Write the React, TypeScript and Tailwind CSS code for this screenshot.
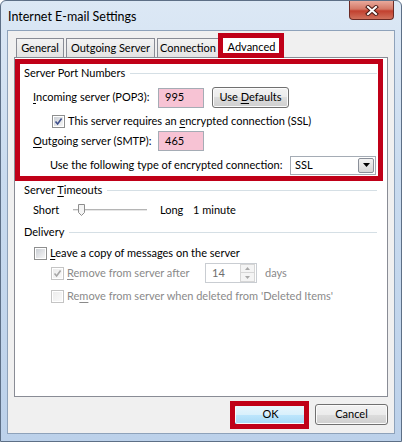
import type { ReactNode } from 'react';

const font = "font-['Lato',sans-serif]";

function U({ children }: { children: ReactNode }) {
  return <span className="underline underline-offset-2 decoration-1">{children}</span>;
}

function WinButton({ children, className = '', primary = false }: { children: ReactNode; className?: string; primary?: boolean }) {
  return (
    <div
      className={`flex h-[21px] items-center justify-center rounded-[3px] border text-[11px] text-black shadow-[inset_0_0_0_1px_#fbfbfb] ${
        primary
          ? 'border-[#3c7fb1] bg-[linear-gradient(180deg,#eaf6fd_0%,#d9f0fc_50%,#bee6fd_50%,#a7d9f5_100%)]'
          : 'border-[#707070] bg-[linear-gradient(180deg,#f2f2f2_0%,#ebebeb_50%,#dddddd_50%,#cfcfcf_100%)]'
      } ${className}`}
    >
      {children}
    </div>
  );
}

function Check({ checked = false, disabled = false }: { checked?: boolean; disabled?: boolean }) {
  return (
    <div
      className={`flex h-[13px] w-[13px] shrink-0 items-center justify-center border bg-white p-px ${
        disabled ? 'border-[#c4c4c4]' : 'border-[#8e8f8f]'
      }`}
    >
      <div
        className={`relative h-full w-full ${
          disabled
            ? 'bg-[linear-gradient(135deg,#ececec,#f9f9f9)]'
            : 'bg-[linear-gradient(135deg,#cbcfd5,#f6f6f6)]'
        }`}
      >
        {checked && (
          <svg viewBox="0 0 9 9" className="absolute inset-0 h-full w-full">
            <path d="M1.5 4.5 L3.6 7 L7.6 1.5" fill="none" stroke={disabled ? '#a6a6a6' : '#3e4f8c'} strokeWidth="1.6" />
          </svg>
        )}
      </div>
    </div>
  );
}

function GroupHeader({ children }: { children: ReactNode }) {
  return (
    <div className="flex h-[16px] items-center pr-[10px]">
      <span>{children}</span>
      <div className="ml-[5px] h-px flex-1 bg-[#d5dfe5]" />
    </div>
  );
}

function Tab({ label, w }: { label: string; w: string }) {
  return (
    <div
      className={`flex h-[19px] items-center justify-center border border-b-0 border-[#898c95] bg-[linear-gradient(180deg,#f3f3f3,#e3e3e3)] text-[11px] ${w}`}
    >
      {label}
    </div>
  );
}

export default function App() {
  return (
    <div
      className={`${font} flex h-[442px] w-[402px] flex-col rounded-t-[6px] border border-[#5d6f86] bg-[linear-gradient(180deg,#dce8f5_0%,#c9dbef_40%,#bcd1ea_100%)] text-[11px] text-black`}
    >
      {/* title bar */}
      <div className="flex h-[29px] shrink-0 items-start justify-between pl-[7px] pr-[7px]">
        <span className="mt-[7px] text-[12.5px]">Internet E-mail Settings</span>
        <div className="flex h-[19px] w-[45px] items-center justify-center rounded-b-[4px] border border-t-0 border-[#6b2a24] bg-[linear-gradient(180deg,#e9a99b_0%,#d47866_45%,#c2402f_55%,#d0715c_100%)]">
          <svg width="14" height="11" viewBox="0 0 14 11">
            <path d="M3 2 L11 9 M11 2 L3 9" stroke="#4a1a14" strokeWidth="4" strokeLinecap="square" />
            <path d="M3 2 L11 9 M11 2 L3 9" stroke="#ffffff" strokeWidth="2" strokeLinecap="square" />
          </svg>
        </div>
      </div>

      {/* client */}
      <div className="mx-[6px] mb-[7px] flex flex-1 flex-col border border-[#8ea2ba] bg-[#f0f0f0] px-[6px] pb-[8px] pt-[5px]">
        {/* tabs */}
        <div className="flex h-[21px] items-end pl-[2px]">
          <Tab label="General" w="w-[48px]" />
          <div className="w-[2px]" />
          <Tab label="Outgoing Server" w="w-[89px]" />
          <div className="w-[2px]" />
          <Tab label="Connection" w="w-[62px]" />
          <div className="relative z-10 -mb-px ml-px flex h-[22px] w-[63px] items-center justify-center border border-b-0 border-[#898c95] bg-white text-[11px]">
            Advanced
            <div className="absolute -left-[3px] -right-[2px] -top-[4px] bottom-0 border-[5px] border-[#c00018]" />
          </div>
        </div>

        {/* panel */}
        <div className="relative flex flex-1 flex-col border border-[#898c95] bg-white pl-[9px]">
          <div className="pointer-events-none absolute left-0 top-px h-[122px] w-[368px] border-[5px] border-[#c00018]" />

          <div className="mt-[7px]">
            <GroupHeader>Server Port Numbers</GroupHeader>
          </div>

          <div className="mt-[6px] flex h-[21px] items-center pl-[9px]">
            <span className="w-[125px]">
              <U>I</U>ncoming server (POP3):
            </span>
            <div className="flex h-[20px] w-[46px] items-center border border-[#a5acb5] bg-[#f7c3d4] pl-[6px]">995</div>
            <WinButton className="ml-[8px] w-[77px]">
              Use&nbsp;<U>D</U>efaults
            </WinButton>
          </div>

          <div className="mt-[5px] flex h-[16px] items-center pl-[28px]">
            <Check checked />
            <span className="ml-[3px]">
              This server requires an <U>e</U>ncrypted connection (SSL)
            </span>
          </div>

          <div className="mt-[2px] flex h-[20px] items-center pl-[9px]">
            <span className="w-[125px]">
              <U>O</U>utgoing server (SMTP):
            </span>
            <div className="flex h-[20px] w-[46px] items-center border border-[#a5acb5] bg-[#f7c3d4] pl-[6px]">465</div>
          </div>

          <div className="mt-[4px] flex h-[20px] items-center pl-[26px]">
            <span className="w-[240px]">Use the following type of encrypted connection:</span>
            <div className="flex h-[19px] w-[86px] items-center border border-[#a5acb5] bg-white pl-[4px]">
              <span className="flex-1">SSL</span>
              <div className="mr-px flex h-[15px] w-[16px] items-center justify-center rounded-[2px] border border-[#8a8f99] bg-[linear-gradient(180deg,#f3f3f3,#d6d6d6)]">
                <svg width="7" height="4" viewBox="0 0 7 4">
                  <path d="M0 0 H7 L3.5 4 Z" fill="#000" />
                </svg>
              </div>
            </div>
          </div>

          <div className="mt-[7px]">
            <GroupHeader>
              Server <U>T</U>imeouts
            </GroupHeader>
          </div>

          <div className="mt-[2px] flex h-[20px] items-center pl-[9px]">
            <span className="w-[40px]">Short</span>
            <svg width="74" height="20" viewBox="0 0 74 20">
              <rect x="0" y="9" width="74" height="1" fill="#b5b5b5" />
              <rect x="0" y="10" width="74" height="1" fill="#e6e6e6" />
              <path d="M5.5 4.5 H11.5 V12.5 L8.5 15.5 L5.5 12.5 Z" fill="#f4f4f4" stroke="#8d8d8d" />
            </svg>
            <span className="ml-[13px] w-[33px]">Long</span>
            <span>1 minute</span>
          </div>

          <div className="mt-[4px]">
            <GroupHeader>Delivery</GroupHeader>
          </div>

          <div className="mt-[5px] flex h-[16px] items-center pl-[10px]">
            <Check />
            <span className="ml-[3px]">
              <U>L</U>eave a copy of messages on the server
            </span>
          </div>

          <div className="mt-[1px] flex h-[22px] items-center pl-[27px] text-[#8a8a8a]">
            <Check checked disabled />
            <span className="ml-[3px] w-[138px]">
              <U>R</U>emove from server after
            </span>
            <div className="flex h-[20px] w-[52px] items-center border border-[#c9cdd2] bg-white pl-[6px]">
              <span className="flex-1 text-[#6d6d6d]">14</span>
              <div className="mr-px flex flex-col">
                <div className="flex h-[9px] w-[15px] items-center justify-center border border-[#d6d6d6] bg-[#f4f4f4]">
                  <svg width="5" height="3" viewBox="0 0 5 3">
                    <path d="M0 3 H5 L2.5 0 Z" fill="#a8a8a8" />
                  </svg>
                </div>
                <div className="flex h-[9px] w-[15px] items-center justify-center border border-t-0 border-[#d6d6d6] bg-[#f4f4f4]">
                  <svg width="5" height="3" viewBox="0 0 5 3">
                    <path d="M0 0 H5 L2.5 3 Z" fill="#a8a8a8" />
                  </svg>
                </div>
              </div>
            </div>
            <span className="ml-[8px]">days</span>
          </div>

          <div className="mt-[4px] flex h-[16px] items-center pl-[27px] text-[#8a8a8a]">
            <Check disabled />
            <span className="ml-[3px]">
              Re<U>m</U>ove from server when deleted from 'Deleted Items'
            </span>
          </div>
        </div>

        {/* buttons */}
        <div className="mt-[7px] flex justify-end gap-[8px]">
          <div className="relative">
            <WinButton primary className="w-[73px]">
              OK
            </WinButton>
            <div className="absolute -bottom-[4px] -left-[4px] -right-[2px] -top-[3px] border-[5px] border-[#c00018]" />
          </div>
          <WinButton className="w-[73px]">Cancel</WinButton>
        </div>
      </div>
    </div>
  );
}
